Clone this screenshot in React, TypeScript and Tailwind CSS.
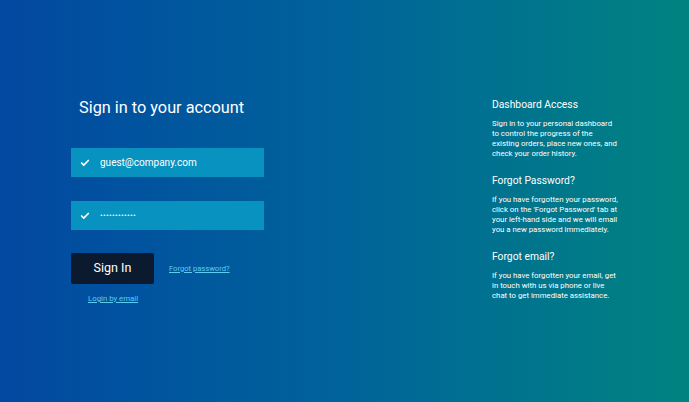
import { Check } from 'lucide-react'

const sections = [
  {
    title: 'Dashboard Access',
    body: 'Sign in to your personal dashboard to control the progress of the existing orders, place new ones, and check your order history.',
  },
  {
    title: 'Forgot Password?',
    body: "If you have forgotten your password, click on the 'Forgot Password' tab at your left-hand side and we will email you a new password immediately.",
  },
  {
    title: 'Forgot email?',
    body: 'If you have forgotten your email, get in touch with us via phone or live chat to get immediate assistance.',
  },
]

function Field({ value, small }: { value: string; small?: boolean }) {
  return (
    <div className="flex items-center h-[29px] w-[193px] bg-[#0892bf] pl-[9px] text-white">
      <Check className="w-[10px] h-[10px] mr-[10px]" strokeWidth={4} />
      <span className={small ? 'text-[8px] tracking-[0.3px]' : 'text-[10px]'}>{value}</span>
    </div>
  )
}

export default function App() {
  return (
    <div
      className="w-[689px] h-[402px] flex text-white bg-gradient-to-r from-[#0448a1] via-[#00639a] to-[#008380]"
      style={{ fontFamily: 'Roboto, "Liberation Sans", sans-serif' }}
    >
      <div className="w-[492px] shrink-0 pl-[71px] pt-[96px]">
        <h1 className="text-[16.3px] pl-[8px] leading-[24px]">Sign in to your account</h1>
        <div className="mt-[28px] flex flex-col gap-[24px]">
          <Field value="guest@company.com" />
          <Field value="••••••••••••" small />
        </div>
        <div className="mt-[23px] flex items-center">
          <button className="w-[83px] h-[31px] bg-[#0b1a2e] rounded-[2px] text-[12.5px]">Sign In</button>
          <a className="ml-[15px] text-[7.6px] text-[#5ccdf2] underline">Forgot password?</a>
        </div>
        <a className="block mt-[9px] ml-[17px] text-[7.8px] text-[#5ccdf2] underline">Login by email</a>
      </div>
      <div className="pt-[98px] w-[128px]">
        {sections.map((s) => (
          <div key={s.title} className="mb-[15px]">
            <h2 className="text-[10.3px] leading-[14px]">{s.title}</h2>
            <p className="mt-[7px] text-[7.8px] leading-[10px]">{s.body}</p>
          </div>
        ))}
      </div>
    </div>
  )
}
